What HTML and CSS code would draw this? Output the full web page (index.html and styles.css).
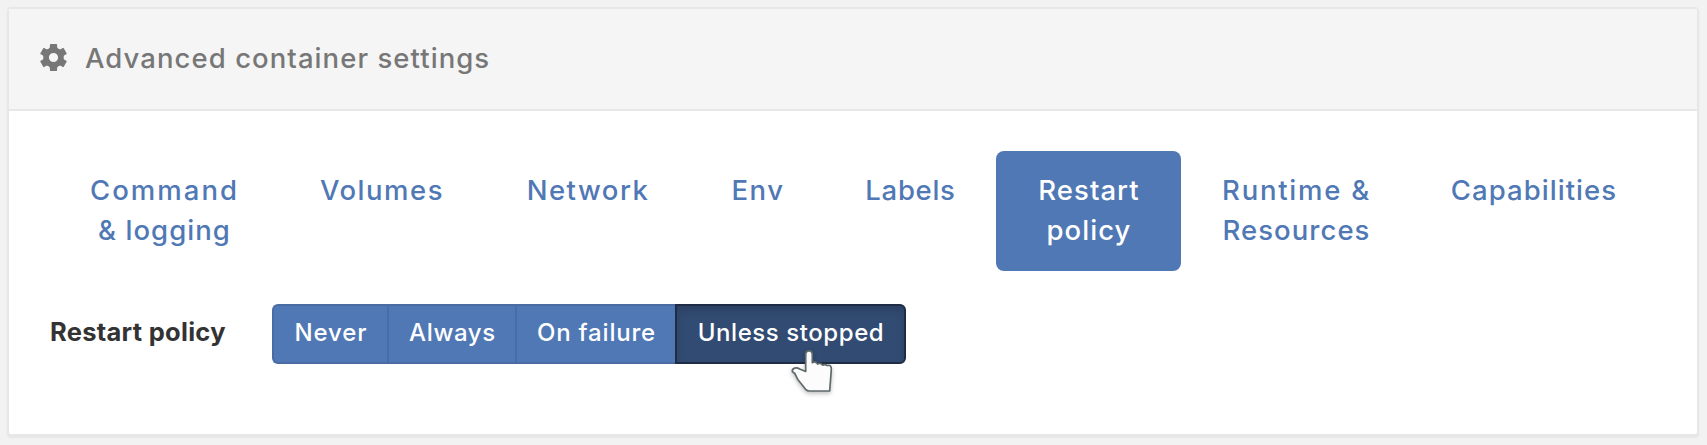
FILE: index.html
```html
<!DOCTYPE html>
<html lang="en">
<head>
<meta charset="utf-8">
<title>Advanced container settings</title>
<link rel="stylesheet" href="styles.css">
</head>
<body>
<section class="panel">
  <header class="panel-header">
    <svg class="gear" viewBox="0 0 27 27" width="27" height="27">
      <circle cx="13.500" cy="13.500" r="7.400" fill="none" stroke="currentColor" stroke-width="5.600"/>
      <g fill="currentColor">
        <path id="tooth" d="M8.700 6L9.900 3V.8q0-.8.8-.8h5.600q.8 0 .8.800V3l1.200 3-2 2h-5.600z"/>
        <use href="#tooth" transform="rotate(60 13.500 13.500)"/>
        <use href="#tooth" transform="rotate(120 13.500 13.500)"/>
        <use href="#tooth" transform="rotate(180 13.500 13.500)"/>
        <use href="#tooth" transform="rotate(240 13.500 13.500)"/>
        <use href="#tooth" transform="rotate(300 13.500 13.500)"/>
      </g>
    </svg>
    <h1 class="panel-title">Advanced container settings</h1>
  </header>
  <div class="panel-body">
    <nav class="tabs">
      <a class="tab tab-command"><span class="track-widest">Command</span><br><span class="track-medium">&amp; logging</span></a>
      <a class="tab tab-volumes"><span class="track-wide">Volumes</span></a>
      <a class="tab tab-network"><span class="track-wide">Network</span></a>
      <a class="tab tab-env"><span class="track-wide">Env</span></a>
      <a class="tab tab-labels"><span class="track-narrow">Labels</span></a>
      <a class="tab tab-restart active"><span class="track-medium">Restart</span><br><span class="track-medium">policy</span></a>
      <a class="tab tab-runtime"><span class="track-wider">Runtime &amp;</span><br><span class="track-medium">Resources</span></a>
      <a class="tab tab-capabilities"><span class="track-medium">Capabilities</span></a>
    </nav>
    <div class="form-row">
      <span class="form-label">Restart policy</span>
      <div class="button-group">
        <button class="choice never">Never</button>
        <button class="choice always">Always</button>
        <button class="choice failure">On failure</button>
        <button class="choice unless selected">Unless stopped</button>
        <svg class="pointer" viewBox="0 0 60 60" width="60" height="60"><path fill="#fcfcfc" stroke="#5f6b6b" stroke-width="1.700" stroke-linejoin="round" d="M25.700 31.500V14.500c0-4.800 6.600-4.800 6.600 0v8.200c1.800-1.200 4.200-.8 5.200 1.300 1.700-1.100 4-.6 5 1.100 1.600-.7 3.600-.4 5 .5 2.700-1.200 4 1 3.800 4L49.700 51H29.500c-1.500 0-2.800-.6-3.900-1.700L18 39.700c-1.200-1.700-2.100-4.300-3.200-6.200L12.300 31.500c-.4-3.600 4.200-4.600 7.300-2.500z"/></svg>
      </div>
    </div>
  </div>
</section>
</body>
</html>
```
FILE: styles.css
```css
* { box-sizing: border-box; }
body {
  margin: 0;
  padding: 7px 8px 9px 7px;
  background: #f2f2f2;
  font-family: Inter, "Open Sans", sans-serif;
}
.panel {
  height: 429px;
  background: #fff;
  border: 2px solid #e7e7e7;
  border-radius: 4px;
  box-shadow: 0 2px 2px rgba(0, 0, 0, .05);
}
.panel-header {
  display: flex;
  align-items: center;
  height: 102px;
  padding: 0 30px 3px 31px;
  gap: 18px;
  color: #777;
  background: #f5f5f5;
  border-bottom: 2px solid #e7e7e7;
}
.panel-title {
  margin: 0;
  font-size: 27.5px;
  line-height: 40px;
  font-weight: 500;
  letter-spacing: 1.06px;
  white-space: nowrap;
}
.panel-body { padding: 40px 40px 0; }
.tabs { display: flex; height: 120px; }
.tab {
  flex: none;
  padding: 19px 0 21px 1px;
  font-size: 27.5px;
  line-height: 40px;
  font-weight: 500;
  text-align: center;
  white-space: nowrap;
  color: #5078b5;
  border-radius: 8px;
}
.track-narrow { letter-spacing: .7px; }
.track-medium { letter-spacing: 1.05px; }
.track-wide { letter-spacing: 1.5px; }
.track-wider { letter-spacing: 1.75px; }
.track-widest { letter-spacing: 2.05px; }
.active { color: #fff; background: #5078b5; }
.tab-command { width: 230px; }
.tab-volumes { width: 205px; }
.tab-network { width: 207px; }
.tab-env { width: 133px; }
.tab-labels { width: 172px; }
.tab-restart { width: 185px; }
.tab-runtime { width: 230px; }
.tab-capabilities { width: 245px; }
.form-row {
  display: flex;
  align-items: center;
  margin-top: 33px;
  padding-left: 1px;
}
.form-label {
  width: 222px;
  padding-bottom: 5px;
  font-size: 25.5px;
  line-height: 36px;
  font-weight: 700;
  letter-spacing: .28px;
  color: #333;
  white-space: nowrap;
}
.button-group { position: relative; display: flex; width: 634px; height: 60px; }
.choice {
  height: 60px;
  margin: 0;
  padding: 0 0 2px 1px;
  font: 500 24px/36px Inter, "Open Sans", sans-serif;
  letter-spacing: .65px;
  color: #fff;
  white-space: nowrap;
  background: #5078b5;
  border: 2px solid #486ca3;
  border-right-width: 0;
}
.never { width: 115px; border-radius: 6px 0 0 6px; letter-spacing: .9px; }
.always { width: 128px; }
.failure { width: 160px; letter-spacing: .8px; }
.unless { width: 231px; border-radius: 0 6px 6px 0; letter-spacing: .57px; }
.selected {
  background: #324b72;
  border: 2px solid #1e2d45;
  box-shadow: inset 0 5px 9px rgba(0, 0, 0, .125);
}
.pointer {
  position: absolute;
  left: 508px;
  top: 36px;
  filter: drop-shadow(0 2px 2px rgba(0, 0, 0, .25));
}
```
